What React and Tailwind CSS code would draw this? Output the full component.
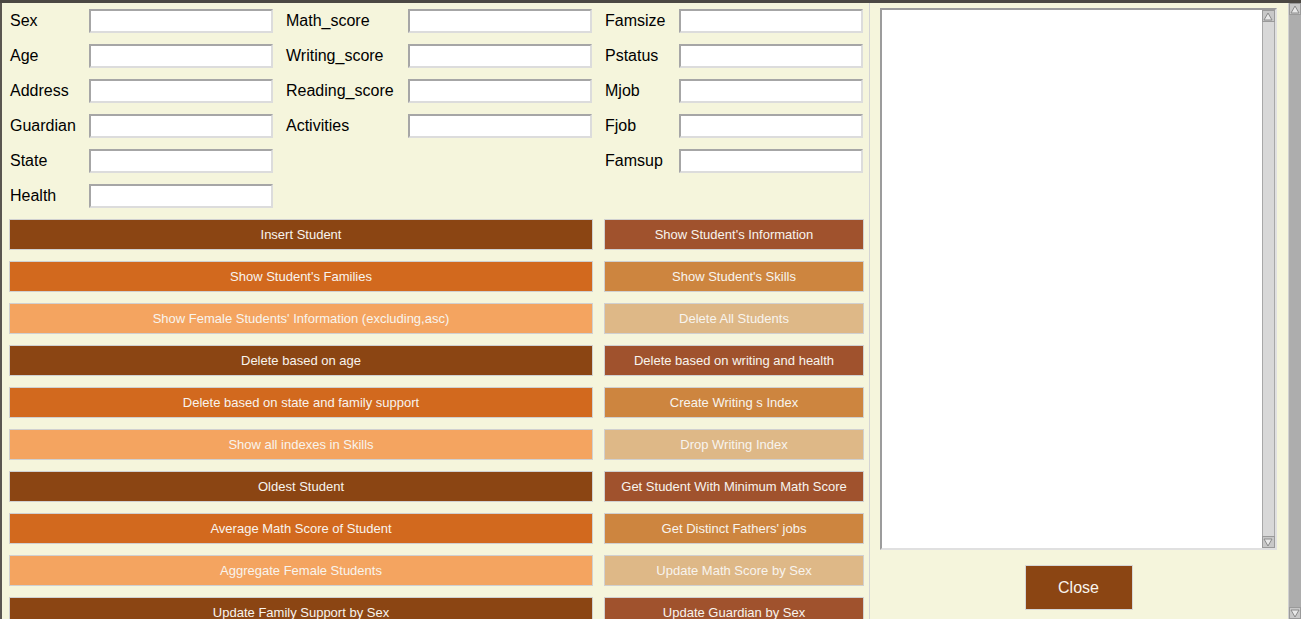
import React from "react";

const fields = [
  // [label, col, row]
  ["Sex", 1, 1],
  ["Age", 1, 2],
  ["Address", 1, 3],
  ["Guardian", 1, 4],
  ["State", 1, 5],
  ["Health", 1, 6],
  ["Math_score", 2, 1],
  ["Writing_score", 2, 2],
  ["Reading_score", 2, 3],
  ["Activities", 2, 4],
  ["Famsize", 3, 1],
  ["Pstatus", 3, 2],
  ["Mjob", 3, 3],
  ["Fjob", 3, 4],
  ["Famsup", 3, 5],
];

const labelCol = { 1: "col-start-1 pl-[1px]", 2: "col-start-4", 3: "col-start-7" };
const inputCol = { 1: "col-start-2", 2: "col-start-5", 3: "col-start-8" };
const rowCls = {
  1: "row-start-1",
  2: "row-start-2",
  3: "row-start-3",
  4: "row-start-4",
  5: "row-start-5",
  6: "row-start-6",
};

const leftShades = ["bg-[#8b4513]", "bg-[#d2691e]", "bg-[#f4a460]"];
const rightShades = ["bg-[#a0522d]", "bg-[#cd853f]", "bg-[#deb887]"];

const buttons = [
  ["Insert Student", "Show Student's Information"],
  ["Show Student's Families", "Show Student's Skills"],
  ["Show Female Students' Information (excluding,asc)", "Delete All Students"],
  ["Delete based on age", "Delete based on writing and health"],
  ["Delete based on state and family support", "Create Writing s Index"],
  ["Show all indexes in Skills", "Drop Writing Index"],
  ["Oldest Student", "Get Student With Minimum Math Score"],
  ["Average Math Score of Student", "Get Distinct Fathers' jobs"],
  ["Aggregate Female Students", "Update Math Score by Sex"],
  ["Update Family Support by Sex", "Update Guardian by Sex"],
];

const Arrow = ({ down }) => (
  <svg width="10" height="9" viewBox="0 0 10 9" className="block">
    {down ? (
      <path d="M1 1 L9 1 L5 8 Z" fill="#e8e8e8" stroke="#8a8a8a" strokeWidth="1" />
    ) : (
      <path d="M5 1 L9 8 L1 8 Z" fill="#e8e8e8" stroke="#8a8a8a" strokeWidth="1" />
    )}
  </svg>
);

const ScrollBtn = ({ down }) => (
  <div className="h-[12px] w-full flex items-center justify-center bg-[#c8c8c8] border border-[#9a9a9a] shrink-0">
    <Arrow down={down} />
  </div>
);

export default function App() {
  return (
    <div
      className="w-[1301px] h-[619px] overflow-hidden flex flex-col bg-[#f5f5dc]"
      style={{ fontFamily: '"Liberation Sans", Arial, sans-serif' }}
    >
      <div className="h-[3px] bg-[#4b4843] shrink-0" />
      <div className="flex flex-1 min-h-0">
        <div className="w-[2px] bg-[#5a5650] shrink-0" />

        {/* Left panel: form + action buttons */}
        <div className="w-[868px] shrink-0 pl-[7px] pt-[6px] border-r border-[#d4d4d4]">
          <div className="grid grid-cols-[80px_184px_13px_122px_184px_13px_74px_184px] grid-rows-[24px_24px_24px_24px_24px_24px] gap-y-[11px]">
            {fields.map(([label, col, row]) => (
              <React.Fragment key={label}>
                <div className={`${labelCol[col]} ${rowCls[row]} flex items-center text-[16px] text-black`}>
                  {label}
                </div>
                <input
                  className={`${inputCol[col]} ${rowCls[row]} h-[24px] bg-white border-2 border-t-[#a6a6a6] border-l-[#a6a6a6] border-b-[#dcdcdc] border-r-[#dcdcdc] outline-none`}
                />
              </React.Fragment>
            ))}
          </div>

          <div className="grid grid-cols-[584px_260px] gap-x-[11px] gap-y-[11px] mt-[11px]">
            {buttons.map(([l, r], i) => (
              <React.Fragment key={i}>
                <div
                  className={`${leftShades[i % 3]} h-[31px] border border-[#d0d0d0] flex items-center justify-center text-[13px] text-[#f8f4ee]`}
                >
                  {l}
                </div>
                <div
                  className={`${rightShades[i % 3]} h-[31px] border border-[#d0d0d0] flex items-center justify-center text-[13px] text-[#f8f4ee]`}
                >
                  {r}
                </div>
              </React.Fragment>
            ))}
          </div>
        </div>

        {/* Right panel: output area + close */}
        <div className="w-[416px] shrink-0 px-[10px] pt-[5px] flex flex-col items-center">
          <div className="w-[397px] h-[542px] flex border-2 border-t-[#9c9c9c] border-l-[#9c9c9c] border-b-[#e0e0e0] border-r-[#e0e0e0] bg-white">
            <div className="flex-1 bg-white" />
            <div className="w-[13px] flex flex-col bg-[#d6d6d6]">
              <ScrollBtn />
              <div className="flex-1 bg-[#d8d8d8] border-x border-[#a8a8a8]" />
              <ScrollBtn down />
            </div>
          </div>
          <button className="mt-[15px] ml-[1px] w-[108px] h-[45px] bg-[#8b4513] border border-[#d6d6d6] text-[16px] text-[#f8f4ee]">
            Close
          </button>
        </div>

        {/* Page scrollbar */}
        <div className="w-[13px] ml-auto shrink-0 flex flex-col bg-[#adadad] border-l border-[#d0d0d0]">
          <ScrollBtn />
          <div className="flex-1 bg-[#adadad]" />
          <ScrollBtn down />
        </div>
      </div>
    </div>
  );
}
